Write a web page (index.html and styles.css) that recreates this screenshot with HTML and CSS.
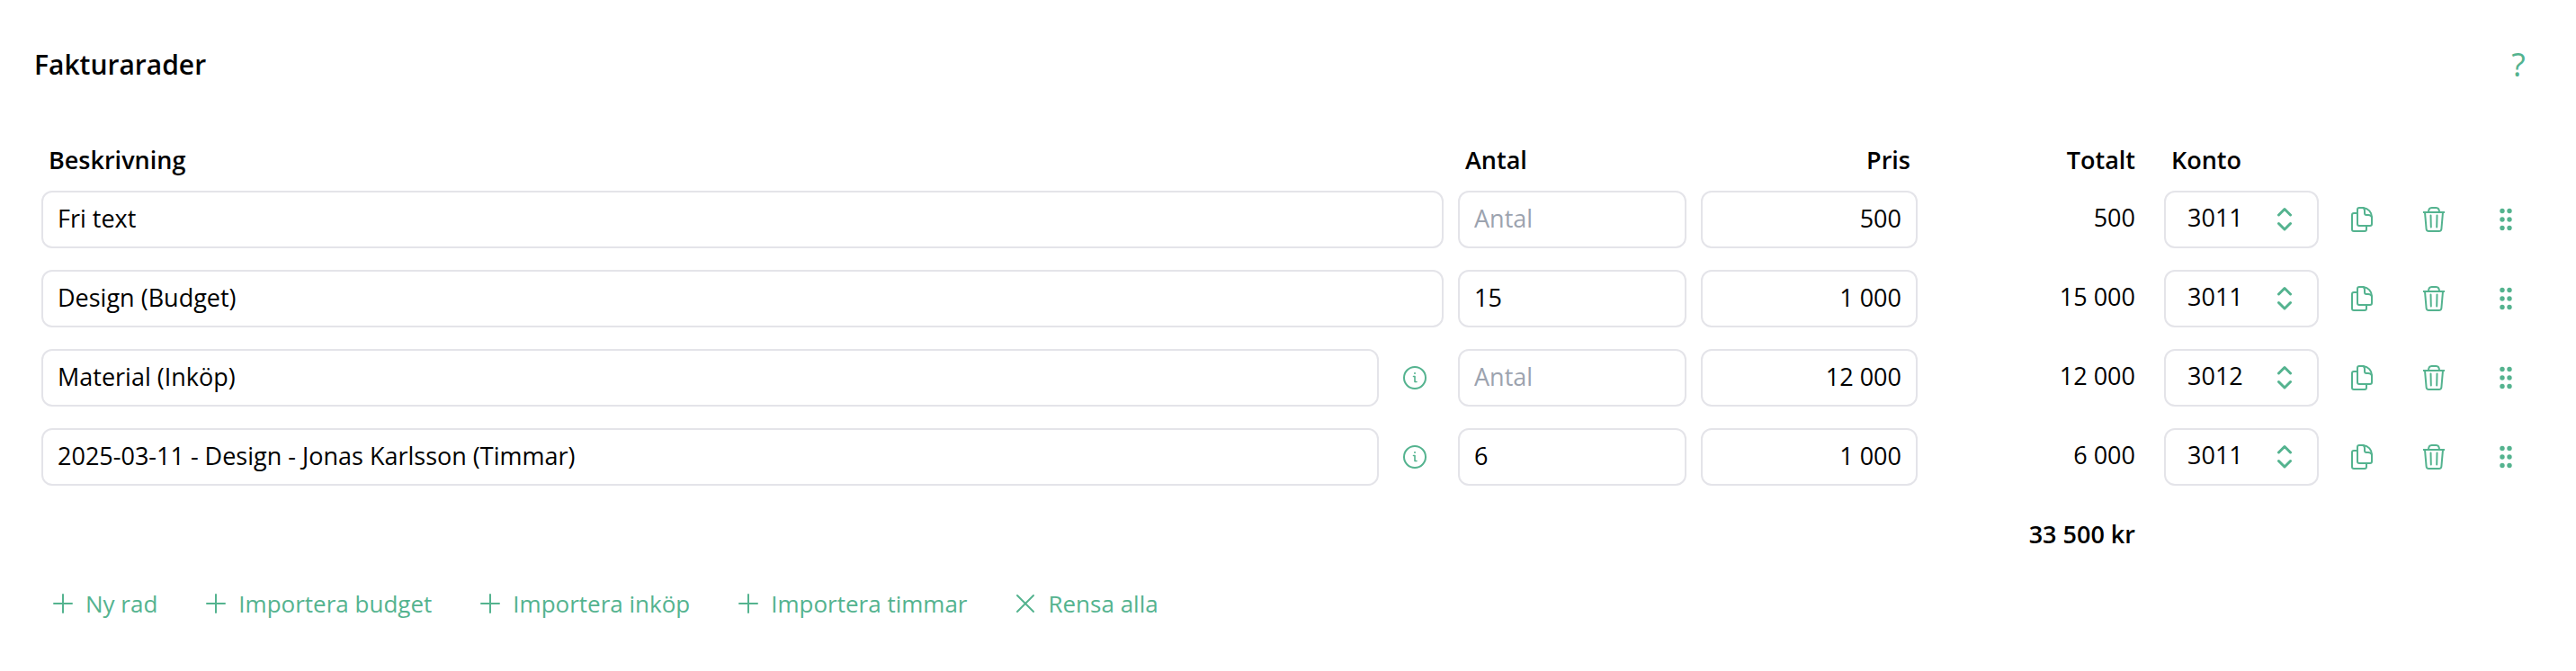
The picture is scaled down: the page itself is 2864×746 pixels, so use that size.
FILE: index.html
```html
<!DOCTYPE html>
<html lang="sv">
<head>
    <meta charset="UTF-8">
    <meta name="viewport" content="width=device-width, initial-scale=1.0">
    <title>Fakturarader</title>
    <link rel="stylesheet" href="styles.css">
</head>
<body>
    <!-- Ikoner -->
    <svg class="sprite" aria-hidden="true">
        <symbol id="icon-copy" viewBox="0 0 24 28">
            <path d="M9 1h4.500C19 1.500 23 6 23 11.500V19a2 2 0 0 1-2 2H9a2 2 0 0 1-2-2V3a2 2 0 0 1 2-2z"/>
            <path d="M13 1c1.500.500 2 2 2 3.500V7a2 2 0 0 0 2 2h2c2 0 3.500 1 4 2.500"/>
            <path d="M7 7H3a2 2 0 0 0-2 2v16a2 2 0 0 0 2 2h12a2 2 0 0 0 2-2v-4"/>
        </symbol>
        <symbol id="icon-trash" viewBox="0 0 24 28">
            <path d="M.500 6h23M6 6c0-3 1.500-5 3.500-5h5c2 0 3.500 2 3.500 5"/>
            <path d="M2 6l1.600 18.500A2.700 2.700 0 0 0 6.300 27h11.400a2.700 2.700 0 0 0 2.700-2.500L22 6"/>
            <path d="M8.500 9.500l.300 13M15.500 9.500l-.300 13"/>
        </symbol>
        <symbol id="icon-drag" viewBox="0 0 24 28">
            <g fill="currentColor" stroke="none">
                <circle cx="8" cy="4.500" r="2.700"/><circle cx="16" cy="4.500" r="2.700"/>
                <circle cx="8" cy="14" r="2.700"/><circle cx="16" cy="14" r="2.700"/>
                <circle cx="8" cy="23.500" r="2.700"/><circle cx="16" cy="23.500" r="2.700"/>
            </g>
        </symbol>
        <symbol id="icon-info" viewBox="0 0 26 26">
            <circle cx="13" cy="13" r="12"/>
            <path d="M11.500 11.500h1.500v6h2" stroke-width="1.600"/>
            <circle cx="13" cy="8" r="1" fill="currentColor" stroke="none"/>
        </symbol>
        <symbol id="icon-chevrons" viewBox="0 0 16 28">
            <path d="M1.500 9L8 2.500 14.500 9M1.500 18.500L8 25l6.500-6.500"/>
        </symbol>
        <symbol id="icon-plus" viewBox="0 0 22 22">
            <path d="M11 1v20M1 11h20"/>
        </symbol>
        <symbol id="icon-cross" viewBox="0 0 22 22">
            <path d="M2 2l18 18M20 2L2 20"/>
        </symbol>
    </svg>

    <header class="section-header">
        <h2>Fakturarader</h2>
        <button type="button" class="help-button" aria-label="Hjälp">?</button>
    </header>

    <main>
        <table class="rows">
            <colgroup>
                <col>
                <col class="col-antal">
                <col class="col-pris">
                <col class="col-totalt">
                <col class="col-konto">
                <col class="col-action">
                <col class="col-action">
                <col class="col-action">
            </colgroup>
            <thead>
                <tr>
                    <th>Beskrivning</th>
                    <th>Antal</th>
                    <th class="right">Pris</th>
                    <th class="total">Totalt</th>
                    <th>Konto</th>
                    <td></td>
                    <td></td>
                    <td></td>
                </tr>
            </thead>
            <tbody>
                <tr>
                    <td><input class="field" type="text" aria-label="Beskrivning" value="Fri text"></td>
                    <td><input class="field" type="text" aria-label="Antal" placeholder="Antal"></td>
                    <td><input class="field right" type="text" aria-label="Pris" value="500"></td>
                    <td class="total">500</td>
                    <td>
                        <div class="select">
                            <select class="field" aria-label="Konto"><option selected>3011</option><option>3012</option></select>
                            <svg class="chevrons"><use href="#icon-chevrons"/></svg>
                        </div>
                    </td>
                    <td><button type="button" class="icon-button" aria-label="Kopiera"><svg class="icon"><use href="#icon-copy"/></svg></button></td>
                    <td><button type="button" class="icon-button" aria-label="Ta bort"><svg class="icon"><use href="#icon-trash"/></svg></button></td>
                    <td><button type="button" class="icon-button" aria-label="Flytta"><svg class="icon"><use href="#icon-drag"/></svg></button></td>
                </tr>
                <tr>
                    <td><input class="field" type="text" aria-label="Beskrivning" value="Design (Budget)"></td>
                    <td><input class="field" type="text" aria-label="Antal" placeholder="Antal" value="15"></td>
                    <td><input class="field right" type="text" aria-label="Pris" value="1 000"></td>
                    <td class="total">15 000</td>
                    <td>
                        <div class="select">
                            <select class="field" aria-label="Konto"><option selected>3011</option><option>3012</option></select>
                            <svg class="chevrons"><use href="#icon-chevrons"/></svg>
                        </div>
                    </td>
                    <td><button type="button" class="icon-button" aria-label="Kopiera"><svg class="icon"><use href="#icon-copy"/></svg></button></td>
                    <td><button type="button" class="icon-button" aria-label="Ta bort"><svg class="icon"><use href="#icon-trash"/></svg></button></td>
                    <td><button type="button" class="icon-button" aria-label="Flytta"><svg class="icon"><use href="#icon-drag"/></svg></button></td>
                </tr>
                <tr>
                    <td>
                        <div class="with-info">
                            <input class="field" type="text" aria-label="Beskrivning" value="Material (Inköp)">
                            <button type="button" class="info-button" aria-label="Info"><svg class="info"><use href="#icon-info"/></svg></button>
                        </div>
                    </td>
                    <td><input class="field" type="text" aria-label="Antal" placeholder="Antal"></td>
                    <td><input class="field right" type="text" aria-label="Pris" value="12 000"></td>
                    <td class="total">12 000</td>
                    <td>
                        <div class="select">
                            <select class="field" aria-label="Konto"><option>3011</option><option selected>3012</option></select>
                            <svg class="chevrons"><use href="#icon-chevrons"/></svg>
                        </div>
                    </td>
                    <td><button type="button" class="icon-button" aria-label="Kopiera"><svg class="icon"><use href="#icon-copy"/></svg></button></td>
                    <td><button type="button" class="icon-button" aria-label="Ta bort"><svg class="icon"><use href="#icon-trash"/></svg></button></td>
                    <td><button type="button" class="icon-button" aria-label="Flytta"><svg class="icon"><use href="#icon-drag"/></svg></button></td>
                </tr>
                <tr>
                    <td>
                        <div class="with-info">
                            <input class="field" type="text" aria-label="Beskrivning" value="2025-03-11 - Design - Jonas Karlsson (Timmar)">
                            <button type="button" class="info-button" aria-label="Info"><svg class="info"><use href="#icon-info"/></svg></button>
                        </div>
                    </td>
                    <td><input class="field" type="text" aria-label="Antal" placeholder="Antal" value="6"></td>
                    <td><input class="field right" type="text" aria-label="Pris" value="1 000"></td>
                    <td class="total">6 000</td>
                    <td>
                        <div class="select">
                            <select class="field" aria-label="Konto"><option selected>3011</option><option>3012</option></select>
                            <svg class="chevrons"><use href="#icon-chevrons"/></svg>
                        </div>
                    </td>
                    <td><button type="button" class="icon-button" aria-label="Kopiera"><svg class="icon"><use href="#icon-copy"/></svg></button></td>
                    <td><button type="button" class="icon-button" aria-label="Ta bort"><svg class="icon"><use href="#icon-trash"/></svg></button></td>
                    <td><button type="button" class="icon-button" aria-label="Flytta"><svg class="icon"><use href="#icon-drag"/></svg></button></td>
                </tr>
            </tbody>
            <tfoot>
                <tr>
                    <td colspan="3"></td>
                    <td class="total sum">33 500 kr</td>
                    <td colspan="4"></td>
                </tr>
            </tfoot>
        </table>

        <!-- Knappar under tabellen -->
        <div class="actions">
            <button type="button" class="link-button"><svg class="sign"><use href="#icon-plus"/></svg>Ny rad</button>
            <button type="button" class="link-button"><svg class="sign"><use href="#icon-plus"/></svg>Importera budget</button>
            <button type="button" class="link-button"><svg class="sign"><use href="#icon-plus"/></svg>Importera inköp</button>
            <button type="button" class="link-button"><svg class="sign"><use href="#icon-plus"/></svg>Importera timmar</button>
            <button type="button" class="link-button"><svg class="sign"><use href="#icon-cross"/></svg>Rensa alla</button>
        </div>
    </main>
</body>
</html>
```
FILE: styles.css
```css
* {
    margin: 0;
    padding: 0;
    box-sizing: border-box;
}

body {
    font-family: "Open Sans", sans-serif;
    font-size: 27px;
    line-height: 36px;
    color: #000;
    background-color: #fff;
    padding: 54px 38px 40px;
}

button,
input,
select {
    font: inherit;
    color: inherit;
}

button {
    background: none;
    border: none;
    color: #54b38f;
    cursor: pointer;
}

svg {
    display: block;
    fill: none;
    stroke: currentColor;
    stroke-width: 2;
    stroke-linecap: round;
    stroke-linejoin: round;
}

.sprite {
    display: none;
}

/* Rubrik */
.section-header {
    display: flex;
    justify-content: space-between;
    align-items: center;
    margin-bottom: 66px;
}

.section-header h2 {
    font-size: 30px;
    font-weight: 600;
}

.help-button {
    width: 52px;
    font-size: 36px;
    text-align: center;
}

/* Tabell */
.rows {
    width: 100%;
    table-layout: fixed;
    border-collapse: collapse;
}

.col-antal {
    width: 270px;
}

.col-pris {
    width: 257px;
}

.col-totalt {
    width: 258px;
}

.col-konto {
    width: 188px;
}

.col-action {
    width: 80px;
}

.rows th {
    height: 44px;
    padding: 0 16px;
    font-weight: 600;
    text-align: left;
}

.rows td {
    height: 88px;
    padding: 0 8px;
}

.rows thead td {
    height: 44px;
}

.rows .right {
    text-align: right;
}

.rows .total {
    padding-right: 24px;
    text-align: right;
}

.rows td.total {
    padding-bottom: 4px;
}

.rows .sum {
    font-weight: 600;
}

.field {
    display: block;
    width: 100%;
    height: 64px;
    padding: 0 16px 4px;
    border: 2px solid #e4e4e9;
    border-radius: 12px;
    background-color: #fff;
}

.field::placeholder {
    color: #9ca3af;
}

.with-info {
    display: flex;
    align-items: center;
}

.info-button {
    flex: none;
    width: 72px;
    padding: 0 19px 0 27px;
}

.info {
    width: 26px;
    height: 26px;
}

.select {
    position: relative;
}

.select .field {
    appearance: none;
    padding: 0 24px 4px;
}

/* Pilarna ligger ovanpå listrutan */
.chevrons {
    position: absolute;
    top: 18px;
    right: 30px;
    width: 16px;
    height: 28px;
    color: #54b38f;
    stroke-width: 3;
    pointer-events: none;
}

.icon-button {
    display: block;
    margin: 0 auto;
}

.icon {
    width: 24px;
    height: 28px;
}

/* Knappar */
.actions {
    display: flex;
    flex-wrap: wrap;
    gap: 54px;
    padding: 0 21px;
}

.link-button {
    display: flex;
    align-items: center;
    gap: 14px;
    height: 62px;
    font-size: 26px;
}

.sign {
    width: 22px;
    height: 22px;
}
```
